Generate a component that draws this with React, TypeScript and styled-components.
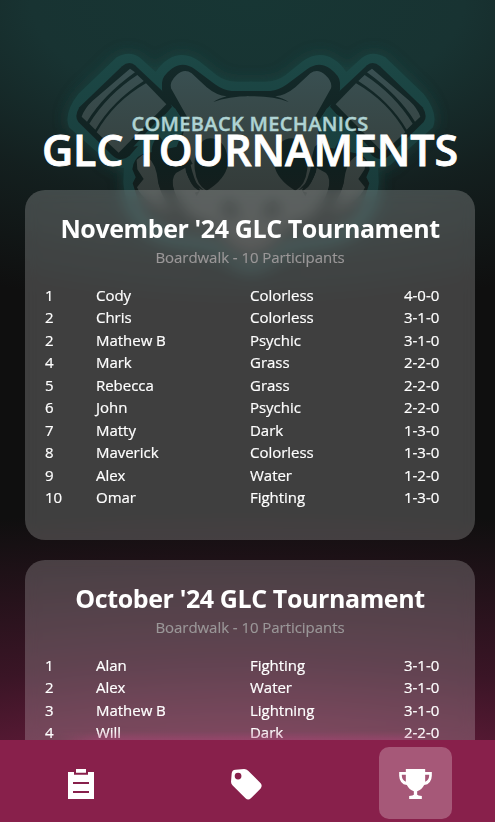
import React from "react";
import styled, { createGlobalStyle } from "styled-components";

const GlobalStyle = createGlobalStyle`
  *{box-sizing:border-box}
  body{margin:0;background:#0f0f0f}
`;

const Screen = styled.main`
  position: relative;
  width: 100%;
  height: 100vh;
  overflow: hidden;
  display: flex;
  flex-direction: column;
  color: #fff;
  font-family: "Open Sans", "Noto Sans", sans-serif;
  background:
    radial-gradient(ellipse 125% 38% at 50% 0%, #173634 0%, #183332 35%, rgba(24, 47, 46, 0.5) 65%, rgba(23, 51, 50, 0) 100%),
    radial-gradient(ellipse 210% 38% at 50% 100%, #88204b 0%, rgba(124, 30, 70, 0.8) 22%, rgba(110, 28, 65, 0.45) 52%, rgba(90, 22, 52, 0) 100%),
    #0f0f0f;
`;

const Emblem = styled.svg`
  position: absolute;
  left: 0;
  top: 0;
  width: 495px;
  height: 320px;
`;

const Content = styled.div`
  flex: 1;
  min-height: 0;
  overflow: hidden;
  padding: 114px 20px 0 25px;
`;

const Header = styled.header`
  position: relative;
  height: 76px;
  display: flex;
  flex-direction: column;
  align-items: center;
  text-transform: uppercase;
  white-space: nowrap;
`;

const Club = styled.div`
  font-size: 20px;
  line-height: 20px;
  font-weight: 600;
  letter-spacing: 0.34px;
  color: #afd3d3;
  -webkit-text-stroke: 0.4px currentColor;
`;

const Title = styled.h1`
  margin: 0;
  font-size: 43px;
  line-height: 32px;
  font-weight: 600;
  letter-spacing: -0.12px;
  -webkit-text-stroke: 0.8px currentColor;
`;

const Card = styled.section`
  height: 350px;
  margin-bottom: 20px;
  padding: 20px 20px 20px 20px;
  border-radius: 20px;
  background: rgba(255, 255, 255, 0.2);
  backdrop-filter: blur(7px);
`;

const CardTitle = styled.h2`
  margin: 0;
  text-align: center;
  font-size: 25px;
  line-height: 36px;
  font-weight: 700;
  letter-spacing: -0.4px;
  white-space: nowrap;
`;

const Venue = styled.p`
  margin: -1px 0 15px;
  text-align: center;
  font-size: 15px;
  line-height: 24px;
  letter-spacing: -0.05px;
  color: #9b9899;
  -webkit-text-stroke: 0.15px currentColor;
`;

const Row = styled.div`
  display: grid;
  grid-template-columns: 51px 154px 154px 1fr;
  height: 22.47px;
  font-size: 15px;
  line-height: 22px;
  letter-spacing: -0.03px;
  white-space: nowrap;
  -webkit-text-stroke: 0.2px currentColor;
`;

const Nav = styled.nav`
  position: relative;
  flex: none;
  height: 82px;
  display: flex;
  justify-content: space-between;
  align-items: flex-start;
  padding: 7px 43px 3px 44px;
  background: #88204b;

  &::before {
    content: "";
    position: absolute;
    left: 60px;
    right: 55px;
    bottom: 100%;
    height: 9px;
    background: linear-gradient(to top, rgba(176, 70, 120, 0.45), rgba(176, 70, 120, 0));
    mask-image: linear-gradient(to right, transparent, #000 40px, #000 calc(100% - 40px), transparent);
  }
`;

const Tab = styled.button<{ $active?: boolean }>`
  width: 73px;
  height: 72px;
  padding: 2px 0 0;
  border: 0;
  border-radius: 10px;
  display: grid;
  place-items: center;
  color: #fff;
  background: ${(p) => (p.$active ? "rgba(255,255,255,.25)" : "transparent")};
`;

const Glyph = styled.svg`
  display: block;
  fill: currentColor;
`;

const TagGlyph = styled(Glyph)`
  margin-right: 3px;
`;

type Standing = [string, string, string, string];
const november: Standing[] = [
  ["1", "Cody", "Colorless", "4-0-0"],
  ["2", "Chris", "Colorless", "3-1-0"],
  ["2", "Mathew B", "Psychic", "3-1-0"],
  ["4", "Mark", "Grass", "2-2-0"],
  ["5", "Rebecca", "Grass", "2-2-0"],
  ["6", "John", "Psychic", "2-2-0"],
  ["7", "Matty", "Dark", "1-3-0"],
  ["8", "Maverick", "Colorless", "1-3-0"],
  ["9", "Alex", "Water", "1-2-0"],
  ["10", "Omar", "Fighting", "1-3-0"],
];
const october: Standing[] = [
  ["1", "Alan", "Fighting", "3-1-0"],
  ["2", "Alex", "Water", "3-1-0"],
  ["3", "Mathew B", "Lightning", "3-1-0"],
  ["4", "Will", "Dark", "2-2-0"],
];

const silhouette =
  "M757 245H710Q675 245 650 226L598 184Q550 150 505 178Q485 190 467 216L420 173Q388 150 350 172L235 282Q190 340 207 382L335 495Q350 505 372 503L370 545Q372 610 425 680Q470 725 570 735Q660 745 690 780Q720 810 757 810Z";

function HalfMark() {
  return (
    <>
      <path d={silhouette} fill="url(#rim)" />
      <g fill="url(#ink)">
        <path d="M388 189Q397 189 405 196L500 285L516 320L390 466Q362 490 335 464L235 366Q222 350 238 322L366 199Q377 189 388 189Z" />
        <path d="M760 273H695Q670 271 645 253L585 208Q550 182 515 206Q486 228 486 248V270Q490 295 524 325L556 372L530 440L428 462Q400 475 397 508L407 532L398 550L420 620Q470 700 590 712Q650 715 680 750Q715 785 760 785Z" />
      </g>
      <path d="M525 325L556 375L500 394L452 430L400 440L478 355Z" fill="url(#rim)" />
      <g fill="url(#bone)">
        <path d="M390 206L405 217Q310 285 261 365L245 350Q254 324 278 302Z" />
        <path d="M412 225L431 243Q335 305 286 389L268 371Q322 284 412 225Z" />
        <path d="M438 250L499 313L356 458L290 397Q342 305 438 250Z" />
        <path d="M766 289Q690 287 640 306Q655 296 680 289Q650 287 620 262L575 220Q553 204 530 225Q508 245 513 265L561 350L550 400Q540 425 562 440Q572 468 571 491Q580 535 600 570L590 590L560 520L525 510L516 540Q525 610 580 655Q640 670 680 720Q715 762 766 763Z" />
        <path d="M410 480L428 464Q460 474 470 520Q475 580 520 640Q430 610 411 562L431 537L412 508Z" />
        <path d="M515 524L555 500Q561 550 598 574Q554 592 528 553Z" />
      </g>
      <g fill="url(#ink)">
        <path d="M596 440Q614 404 651 419Q683 435 684 492Q676 539 620 572Q590 557 584 507Q580 470 596 440Z" />
        <path d="M475 405Q500 433 525 494L570 477L578 491L528 519Q512 535 521 577L535 620Q483 604 474 541Q477 500 461 471Q444 444 475 405Z" />
        <path d="M566 464Q562 526 600 560L610 571Q558 548 558 502Z" />
        <path d="M680 600Q720 610 708 655Q670 656 668 625Z" />
      </g>
    </>
  );
}

function SkullMark() {
  return (
    <Emblem viewBox="0 0 1485 960" aria-hidden>
      <defs>
        <linearGradient id="rim" gradientUnits="userSpaceOnUse" x1="0" y1="160" x2="0" y2="780">
          <stop stopColor="#1c4846" />
          <stop offset="0.5" stopColor="#193f3e" />
          <stop offset="1" stopColor="#1b3030" />
        </linearGradient>
        <linearGradient id="ink" gradientUnits="userSpaceOnUse" x1="0" y1="190" x2="0" y2="620">
          <stop stopColor="#142a2a" />
          <stop offset="0.75" stopColor="#101f1e" />
          <stop offset="1" stopColor="#171d1c" />
        </linearGradient>
        <linearGradient id="bone" gradientUnits="userSpaceOnUse" x1="0" y1="200" x2="0" y2="740">
          <stop stopColor="#395052" />
          <stop offset="0.5" stopColor="#36413f" />
          <stop offset="1" stopColor="#303231" />
        </linearGradient>
        <filter id="glow" x="-20%" y="-20%" width="140%" height="140%">
          <feGaussianBlur stdDeviation="22" />
        </filter>
      </defs>
      <g filter="url(#glow)" fill="#1a4f4c" opacity="0.6">
        <path d={silhouette} />
        <path d={silhouette} transform="translate(1506 0) scale(-1 1)" />
      </g>
      <HalfMark />
      <g transform="translate(1506 0) scale(-1 1)">
        <HalfMark />
      </g>
    </Emblem>
  );
}

function Tournament({ month, rows }: { month: string; rows: Standing[] }) {
  return (
    <Card>
      <CardTitle>{month} '24 GLC Tournament</CardTitle>
      <Venue>Boardwalk - 10 Participants</Venue>
      {rows.map((r, i) => (
        <Row key={i}>
          {r.map((cell, j) => (
            <span key={j}>{cell}</span>
          ))}
        </Row>
      ))}
    </Card>
  );
}

export default function App() {
  return (
    <Screen>
      <GlobalStyle />
      <SkullMark />
      <Content>
        <Header>
          <Club>Comeback Mechanics</Club>
          <Title>GLC Tournaments</Title>
        </Header>
        <Tournament month="November" rows={november} />
        <Tournament month="October" rows={october} />
      </Content>
      <Nav>
        <Tab aria-label="Decklists">
          <Glyph width="26" height="30" viewBox="0 0 78 90">
            <path d="M24 0H54V11H24ZM0 9H18V17H60V9H78V90H0ZM15 39V45H63V39ZM15 66V72H63V66Z" fillRule="evenodd" />
          </Glyph>
        </Tab>
        <Tab aria-label="Tags">
          <TagGlyph width="31" height="31" viewBox="0 0 92 92">
            <path d="M13 2L39 0Q46 0 51 5L88 42Q94 50 88 58L59 87Q51 94 43 87L5 49Q0 44 0 38L2 13Q3 3 13 2ZM21 11A10 10 0 1 0 21 31A10 10 0 1 0 21 11Z" fillRule="evenodd" />
          </TagGlyph>
        </Tab>
        <Tab $active aria-label="Tournaments">
          <Glyph width="33" height="30" viewBox="0 0 98 90">
            <path d="M20 0H78V9H98V20Q97 45 75 48Q68 62 54 67V77Q56 80 68 81V90H30V81Q42 80 44 77V67Q30 62 23 48Q1 45 0 20V9H20ZM8 17V21Q9 34 20 38V17ZM78 17V38Q89 34 90 21V17Z" fillRule="evenodd" />
          </Glyph>
        </Tab>
      </Nav>
    </Screen>
  );
}
